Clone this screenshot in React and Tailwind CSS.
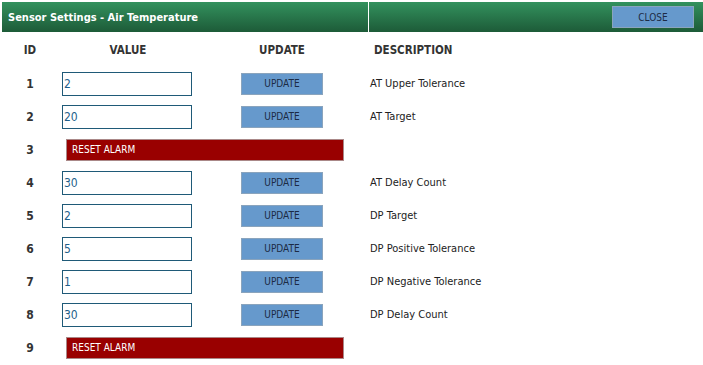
import React from "react";

const rows = [
  { id: 1, value: "2", desc: "AT Upper Tolerance" },
  { id: 2, value: "20", desc: "AT Target" },
  { id: 3, reset: true },
  { id: 4, value: "30", desc: "AT Delay Count" },
  { id: 5, value: "2", desc: "DP Target" },
  { id: 6, value: "5", desc: "DP Positive Tolerance" },
  { id: 7, value: "1", desc: "DP Negative Tolerance" },
  { id: 8, value: "30", desc: "DP Delay Count" },
  { id: 9, reset: true },
];

export default function App() {
  return (
    <div className="w-[703px] h-[365px] bg-white overflow-hidden pt-[2px] pl-[2px] text-[#333]" style={{ fontFamily: '"DejaVu Sans Condensed", "DejaVu Sans", sans-serif' }}>
      <div className="flex h-[30px] bg-gradient-to-b from-[#33925e] to-[#1d5b38]">
        <div className="w-[367px] border-r border-white flex items-center pl-[6px] pt-[2px] text-white font-bold text-[11px]">
          Sensor Settings - Air Temperature
        </div>
        <div className="flex-1 flex items-center justify-end pr-[9px]">
          <button className="w-[82px] h-[22px] bg-[#6699cc] border border-[#8aa4bd] text-[10px] text-[#1c2b44]">CLOSE</button>
        </div>
      </div>
      <div className="flex items-center h-[35px] pt-[2px] text-[11.5px] font-bold">
        <div className="w-[56px] text-center">ID</div>
        <div className="w-[140px] text-center">VALUE</div>
        <div className="w-[168px] text-center">UPDATE</div>
        <div className="pl-[8px]">DESCRIPTION</div>
      </div>
      <div className="flex flex-col">
        {rows.map((r) => (
          <div key={r.id} className="flex items-center h-[33px] text-[11px]">
            <div className="w-[56px] text-center font-bold text-[12px]">{r.id}</div>
            {r.reset ? (
              <div className="ml-[8px] w-[278px] h-[22px] bg-[#990000] border border-[#a88] flex items-center pl-[5px] text-white text-[10px]">
                RESET ALARM
              </div>
            ) : (
              <>
                <div className="ml-[4px] w-[130px] h-[24px] border border-[#1f5a78] flex items-center pl-[1px] text-[#1f5f8b] text-[12px]">
                  {r.value}
                </div>
                <button className="ml-[49px] w-[82px] h-[22px] bg-[#6699cc] border border-[#8aa4bd] text-[10px] text-[#1c2b44]">UPDATE</button>
                <div className="ml-[47px] pt-[2px] text-[#222]">{r.desc}</div>
              </>
            )}
          </div>
        ))}
      </div>
    </div>
  );
}
